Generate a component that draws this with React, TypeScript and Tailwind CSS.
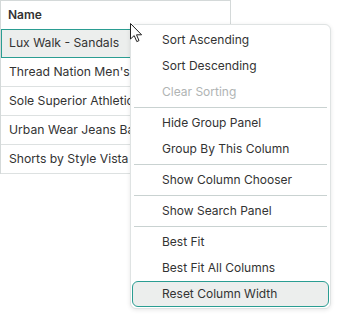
const rows = [
  'Lux Walk - Sandals',
  "Thread Nation Men's Shirts",
  'Sole Superior Athletic Shoes',
  'Urban Wear Jeans Basics',
  'Shorts by Style Vista',
];

type Entry = { label: string; disabled?: boolean; active?: boolean } | 'sep';

const menu: Entry[] = [
  { label: 'Sort Ascending' },
  { label: 'Sort Descending' },
  { label: 'Clear Sorting', disabled: true },
  'sep',
  { label: 'Hide Group Panel' },
  { label: 'Group By This Column' },
  'sep',
  { label: 'Show Column Chooser' },
  'sep',
  { label: 'Show Search Panel' },
  'sep',
  { label: 'Best Fit' },
  { label: 'Best Fit All Columns' },
  { label: 'Reset Column Width', active: true },
];

function Cursor() {
  return (
    <svg width="13" height="20" viewBox="0 0 13 20" className="absolute left-[130px] top-[23px]">
      <path
        d="M0.5 0.5 L0.5 16 L4.2 12.6 L6.8 18.6 L9 17.6 L6.5 11.8 L11.6 11.8 Z"
        fill="#fff"
        stroke="#222"
        strokeWidth="1"
        strokeLinejoin="round"
      />
    </svg>
  );
}

export default function App() {
  return (
    <div className="relative w-[350px] h-[324px] bg-white font-['Inter',sans-serif] text-[#333]">
      <div className="w-[231px] border border-[#d4d9d9] border-b-0">
        <div className="h-[28px] px-[7px] flex items-center text-[12px] font-semibold text-[#333]">Name</div>
        {rows.map((r, i) => (
          <div
            key={r}
            className={
              i === 0
                ? 'h-[29px] px-[7px] flex items-center text-[12.2px] bg-[#eceeed] border border-[#2a9d92] whitespace-nowrap overflow-hidden'
                : 'h-[29px] px-[8px] flex items-center text-[12.2px] border-b border-[#dde1e1] whitespace-nowrap overflow-hidden'
            }
          >
            {r}
          </div>
        ))}
      </div>

      <div className="absolute left-[130px] top-[24px] w-[201px] bg-white border border-[#dfe3e3] rounded-[6px] shadow-[0_1px_4px_rgba(0,0,0,0.10)] pt-[2px] pb-[1px] px-[1px]">
        {menu.map((m, i) =>
          m === 'sep' ? (
            <div key={i} className="mx-[2px] mt-[2px] mb-[2px] h-px bg-[#c9d2d1]" />
          ) : m.active ? (
            <div
              key={i}
              className="h-[26px] pl-[29px] flex items-center text-[12px] whitespace-nowrap text-[#333] bg-[#eceeed] border border-[#2a9d92] rounded-[6px]"
            >
              {m.label}
            </div>
          ) : (
            <div
              key={i}
              className={
                'h-[26px] pl-[30px] flex items-center text-[12px] whitespace-nowrap ' +
                (m.disabled ? 'text-[#b0b4b4]' : 'text-[#333]')
              }
            >
              {m.label}
            </div>
          )
        )}
      </div>

      <Cursor />
    </div>
  );
}
